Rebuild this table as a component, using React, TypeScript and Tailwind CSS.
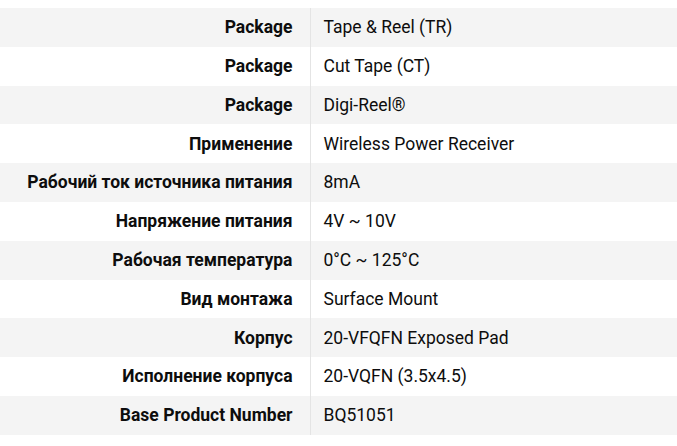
const rows: [string, string][] = [
  ["Package", "Tape & Reel (TR)"],
  ["Package", "Cut Tape (CT)"],
  ["Package", "Digi-Reel®"],
  ["Применение", "Wireless Power Receiver"],
  ["Рабочий ток источника питания", "8mA"],
  ["Напряжение питания", "4V ~ 10V"],
  ["Рабочая температура", "0°C ~ 125°C"],
  ["Вид монтажа", "Surface Mount"],
  ["Корпус", "20-VFQFN Exposed Pad"],
  ["Исполнение корпуса", "20-VQFN (3.5x4.5)"],
  ["Base Product Number", "BQ51051"],
];

export default function App() {
  return (
    <div className="w-[677px] h-[446px] bg-white pt-2 font-['Roboto',sans-serif] text-[17.5px] text-[#0d0d0d]">
      <table className="w-full border-collapse">
        <tbody>
          {rows.map(([label, value], i) => (
            <tr key={i} className={i % 2 === 0 ? "bg-[#f4f4f4]" : "bg-white"}>
              <th className="w-[310px] h-[38.8px] pr-[17px] text-right font-bold border-r border-[#e4e4e4] p-0">
                {label}
              </th>
              <td className="h-[38.8px] pl-[13px] p-0 font-normal">{value}</td>
            </tr>
          ))}
        </tbody>
      </table>
    </div>
  );
}
